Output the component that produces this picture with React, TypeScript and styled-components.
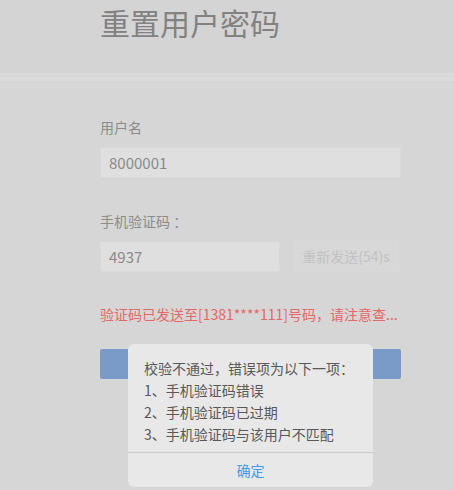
import React from 'react';
import styled, { createGlobalStyle } from 'styled-components';

const GlobalStyle = createGlobalStyle`
  html, body {
    margin: 0;
    padding: 0;
    background: #d6d6d6;
  }
  body {
    font-family: "Noto Sans CJK SC", "Noto Sans", sans-serif;
  }
`;

const Page = styled.div`
  width: 454px;
  height: 490px;
  overflow: hidden;
  background: #d6d6d6;
`;

const Header = styled.header`
  box-sizing: border-box;
  height: 81px;
  padding-left: 100px;
  background: #d4d4d4;
  border-bottom: 8px solid #dadada;
`;

const Title = styled.h1`
  margin: 0;
  padding-top: 4px;
  font-size: 30px;
  line-height: 36px;
  font-weight: 400;
  color: #828282;
`;

const Form = styled.div`
  position: relative;
  width: 301px;
  margin-left: 100px;
  padding-top: 36px;
`;

const Label = styled.div<{ $gap?: number }>`
  font-size: 14px;
  line-height: 20px;
  color: #8c8c8c;
  margin-top: ${({ $gap = 0 }) => $gap}px;
`;

const Row = styled.div`
  display: flex;
  gap: 13px;
  margin-top: 10px;
`;

const Field = styled.div<{ $width?: number }>`
  box-sizing: border-box;
  width: ${({ $width }) => ($width ? `${$width}px` : '100%')};
  height: 31px;
  padding-left: 8px;
  background: #dfdfdf;
  border: 1px solid #d9d9d9;
  font-size: 15px;
  line-height: 29px;
  color: #8a8a8a;
`;

const ResendButton = styled.div`
  box-sizing: border-box;
  width: 106px;
  height: 31px;
  border: 1px solid #d9d9d9;
  background: #d8d8d8;
  font-size: 14px;
  line-height: 29px;
  text-align: center;
  color: #c2c2c2;
  white-space: nowrap;
`;

const Notice = styled.div`
  margin-top: 32px;
  font-size: 14px;
  line-height: 20px;
  color: #e46868;
  white-space: nowrap;
`;

const Submit = styled.div`
  margin-top: 25px;
  height: 30px;
  border-radius: 2px;
  background: #7a9bc8;
`;

const Dialog = styled.div`
  position: absolute;
  left: 28px;
  top: 263px;
  width: 245px;
  height: 143px;
  border-radius: 6px;
  background: #e8e8e8;
  display: flex;
  flex-direction: column;
  overflow: hidden;
`;

const DialogBody = styled.div`
  flex: 1;
  padding: 13px 0 0 16px;
  font-size: 14px;
  line-height: 22px;
  color: #585858;
  white-space: nowrap;
`;

const DialogAction = styled.div`
  height: 34px;
  border-top: 1px solid #c9c9c9;
  text-align: center;
  font-size: 14px;
  line-height: 34px;
  color: #3f9ce6;
`;

const errors = ['1、手机验证码错误', '2、手机验证码已过期', '3、手机验证码与该用户不匹配'];

const App = () => (
  <Page>
    <GlobalStyle />
    <Header>
      <Title>重置用户密码</Title>
    </Header>
    <Form>
      <Label>用户名</Label>
      <Row>
        <Field>8000001</Field>
      </Row>
      <Label $gap={33}>手机验证码 ：</Label>
      <Row>
        <Field $width={180}>4937</Field>
        <ResendButton>重新发送(54)s</ResendButton>
      </Row>
      <Notice>验证码已发送至[1381****111]号码，请注意查...</Notice>
      <Submit />
      <Dialog>
        <DialogBody>
          <div>校验不通过，错误项为以下一项：</div>
          {errors.map((e) => (
            <div key={e}>{e}</div>
          ))}
        </DialogBody>
        <DialogAction>确定</DialogAction>
      </Dialog>
    </Form>
  </Page>
);

export default App;
